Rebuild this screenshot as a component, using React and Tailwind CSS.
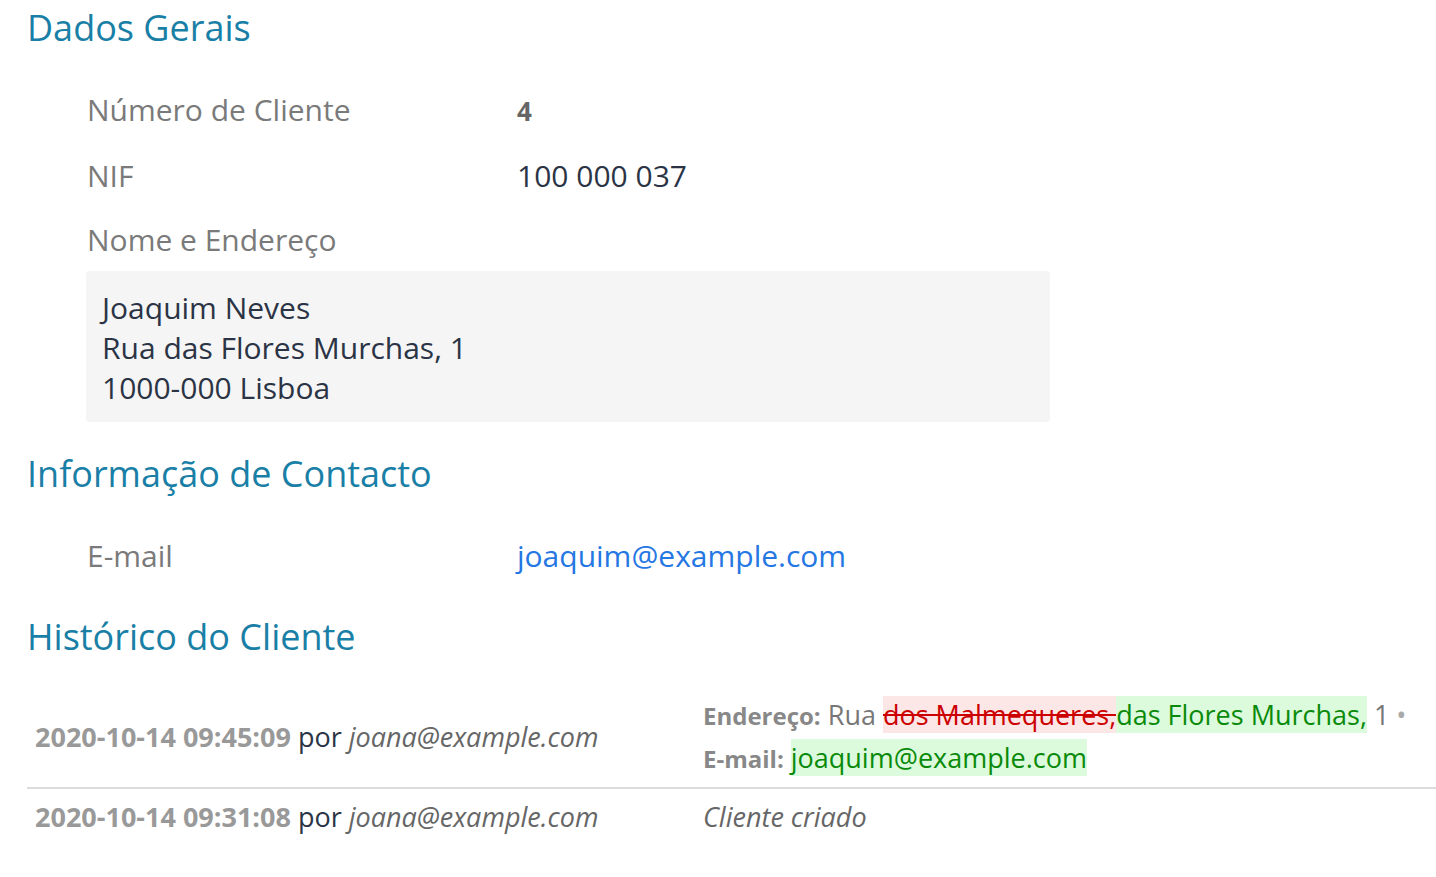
import React from 'react';

const FONT = "font-['Open_Sans',sans-serif]";

function SectionTitle({ children }) {
    return <h2 className="text-[36px] leading-[44px] text-[#1a7fa6] font-normal">{children}</h2>;
}

function Row({ label, children, h = 'h-[66px]' }) {
    return (
        <div className={`flex items-center ${h}`}>
            <div className="w-[430px] shrink-0 text-[30px] text-[#7a7a7a]">{label}</div>
            <div className="text-[30px]">{children}</div>
        </div>
    );
}

export default function App() {
    return (
        <div className={`${FONT} bg-white min-h-screen pl-[27px] pt-[6px]`}>
            {/* Dados gerais */}
            <SectionTitle>Dados Gerais</SectionTitle>
            <div className="pl-[60px] mt-[26px]">
                <Row label="Número de Cliente">
                    <span className="font-bold text-[#666] text-[26px]">4</span>
                </Row>
                <Row label="NIF">
                    <span className="text-[#2b3445]">100 000 037</span>
                </Row>
                <div className="h-[64px] flex items-center text-[30px] text-[#7a7a7a] -mt-[1px]">Nome e Endereço</div>
                <div className="w-[964px] -ml-[1px] bg-[#f5f5f5] rounded-[4px] pt-[17px] pb-[14px] px-[16px] text-[30px] leading-[40px] text-[#2b3445]">
                    <div>Joaquim Neves</div>
                    <div>Rua das Flores Murchas, 1</div>
                    <div>1000-000 Lisboa</div>
                </div>
            </div>

            {/* Contacto */}
            <div className="mt-[30px]">
                <SectionTitle>Informação de Contacto</SectionTitle>
            </div>
            <div className="pl-[60px] mt-[27px]">
                <Row label="E-mail" h="h-[65px]">
                    <a className="text-[#2577e3]">joaquim@example.com</a>
                </Row>
            </div>

            {/* Histórico */}
            <div className="mt-[27px]">
                <SectionTitle>Histórico do Cliente</SectionTitle>
            </div>
            <table className="mt-[28px] w-[1409px] border-collapse text-[27px]">
                <tbody>
                    <tr className="border-b-2 border-[#dcdcdc]">
                        <td className="w-[676px] pl-[8px] align-middle">
                            <span className="font-bold text-[#999]">2020-10-14 09:45:09</span>
                            <span className="text-[#2b3445]"> por </span>
                            <em className="text-[#666]">joana@example.com</em>
                        </td>
                        <td className="align-middle pt-[7px] pb-[7px] leading-[42px] text-[#777]">
                            <div>
                                <strong className="text-[#888] text-[24px]">Endereço:</strong> Rua{' '}
                                <del className="bg-[#fde6e6] text-[#cc0000]">dos Malmequeres,</del>
                                <ins className="bg-[#dcfadc] text-[#0a8a0a] no-underline">das Flores Murchas,</ins> 1 <span className="text-[#aaa]">•</span>
                            </div>
                            <div>
                                <strong className="text-[#888] text-[24px]">E-mail:</strong>{' '}
                                <ins className="bg-[#dcfadc] text-[#0a8a0a] no-underline">joaquim@example.com</ins>
                            </div>
                        </td>
                    </tr>
                    <tr>
                        <td className="pl-[8px] h-[58px] align-middle">
                            <span className="font-bold text-[#999]">2020-10-14 09:31:08</span>
                            <span className="text-[#2b3445]"> por </span>
                            <em className="text-[#666]">joana@example.com</em>
                        </td>
                        <td className="align-middle italic text-[#666]">Cliente criado</td>
                    </tr>
                </tbody>
            </table>
        </div>
    );
}
